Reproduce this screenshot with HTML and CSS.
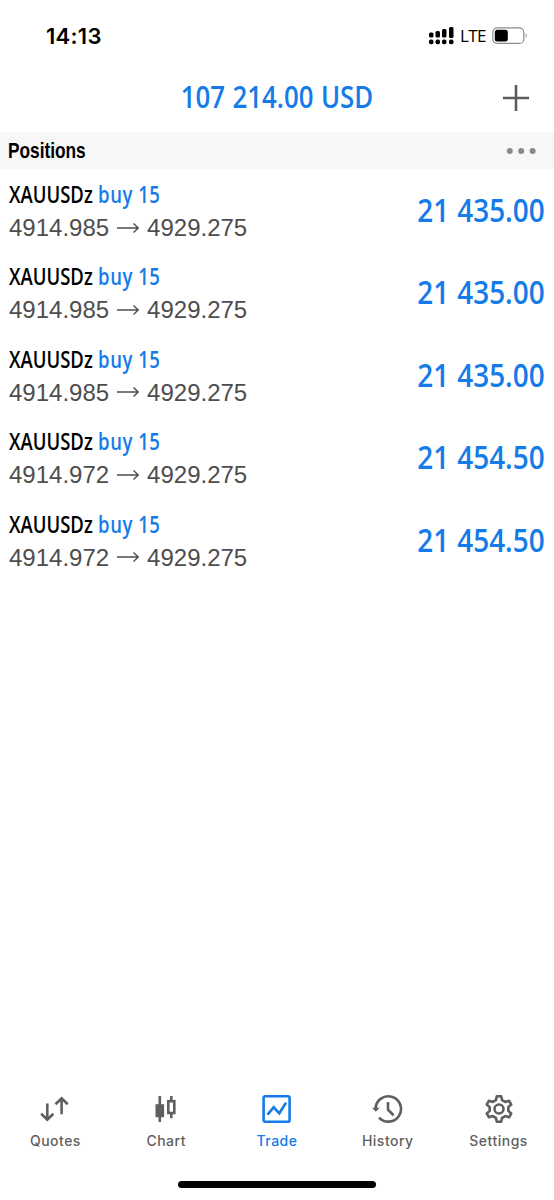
FILE: index.html
```html
<!DOCTYPE html>
<html lang="en">
<head>
    <meta charset="utf-8">
    <title>Trade</title>
    <link rel="stylesheet" href="styles.css">
</head>
<body>
    <div class="status-bar">
        <span class="time">14:13</span>
        <div class="status-icons">
            <svg width="26" height="18" viewBox="0 0 26 18">
                <rect x="0" y="5.5" width="4.5" height="5" rx="1.5"/>
                <rect x="6.5" y="4" width="4.5" height="6.5" rx="1.5"/>
                <rect x="13" y="2" width="4.5" height="8.5" rx="1.5"/>
                <rect x="20" y="0" width="4.5" height="11" rx="1.5"/>
                <rect x="0" y="12.6" width="4.5" height="4.7" rx="1.8"/>
                <rect x="6.5" y="12.6" width="4.5" height="4.7" rx="1.8"/>
                <rect x="13" y="12.6" width="4.5" height="4.7" rx="1.8"/>
                <rect x="20" y="12.6" width="4.5" height="4.7" rx="1.8"/>
            </svg>
            <span class="network">LTE</span>
            <svg width="36" height="18" viewBox="0 0 36 18">
                <rect x="0.8" y="0.8" width="31" height="15.6" rx="4.5" fill="none" stroke="#8c8c8c" stroke-width="1.2"/>
                <rect x="2.8" y="2.7" width="13" height="11.8" rx="2.5"/>
                <path d="M33.7 6.2 Q36 8.6 33.7 11z" fill="#8c8c8c"/>
            </svg>
        </div>
    </div>

    <div class="header">
        <h1 class="balance">107 214.00 USD</h1>
        <svg class="add" width="26" height="26" viewBox="0 0 26 26">
            <path d="M13 0v26M0 13h26" stroke="#5c5c5c" stroke-width="2.6"/>
        </svg>
    </div>

    <div class="section">
        <h2>Positions</h2>
        <svg width="30" height="8" viewBox="0 0 30 8" fill="#8a8a8a">
            <circle cx="3.8" cy="4" r="3"/>
            <circle cx="15.2" cy="4" r="3"/>
            <circle cx="26.6" cy="4" r="3"/>
        </svg>
    </div>

    <div class="positions">
        <div class="position">
            <div>
                <div class="symbol"><span class="name">XAUUSDz</span><span class="side">buy 15</span></div>
                <div class="prices">4914.985<svg class="arrow" viewBox="0 0 22 12"><path d="M0 6h21M16.5 1.5l4.7 4.5-4.7 4.5"/></svg>4929.275</div>
            </div>
            <div class="profit">21 435.00</div>
        </div>
        <div class="position">
            <div>
                <div class="symbol"><span class="name">XAUUSDz</span><span class="side">buy 15</span></div>
                <div class="prices">4914.985<svg class="arrow" viewBox="0 0 22 12"><path d="M0 6h21M16.5 1.5l4.7 4.5-4.7 4.5"/></svg>4929.275</div>
            </div>
            <div class="profit">21 435.00</div>
        </div>
        <div class="position">
            <div>
                <div class="symbol"><span class="name">XAUUSDz</span><span class="side">buy 15</span></div>
                <div class="prices">4914.985<svg class="arrow" viewBox="0 0 22 12"><path d="M0 6h21M16.5 1.5l4.7 4.5-4.7 4.5"/></svg>4929.275</div>
            </div>
            <div class="profit">21 435.00</div>
        </div>
        <div class="position">
            <div>
                <div class="symbol"><span class="name">XAUUSDz</span><span class="side">buy 15</span></div>
                <div class="prices">4914.972<svg class="arrow" viewBox="0 0 22 12"><path d="M0 6h21M16.5 1.5l4.7 4.5-4.7 4.5"/></svg>4929.275</div>
            </div>
            <div class="profit">21 454.50</div>
        </div>
        <div class="position">
            <div>
                <div class="symbol"><span class="name">XAUUSDz</span><span class="side">buy 15</span></div>
                <div class="prices">4914.972<svg class="arrow" viewBox="0 0 22 12"><path d="M0 6h21M16.5 1.5l4.7 4.5-4.7 4.5"/></svg>4929.275</div>
            </div>
            <div class="profit">21 454.50</div>
        </div>
    </div>

    <div class="tabs">
        <div class="tab">
            <svg width="32" height="32" viewBox="0 0 32 32">
                <path d="M8.3 9.6v16M2.2 19.8l6.100 6 6.100-6M22.6 20.3V4M16.5 10.2l6.100-6 6.100 6"/>
            </svg>
            <span>Quotes</span>
        </div>
        <div class="tab">
            <svg width="32" height="32" viewBox="0 0 32 32">
                <path d="M9.8 2v26M21.3 2v5M21.3 19v5.3"/>
                <rect x="5.5" y="10.2" width="8.6" height="13" fill="#5f5f5f" stroke="none"/>
                <rect x="18.3" y="7.2" width="6" height="11.8"/>
            </svg>
            <span>Chart</span>
        </div>
        <div class="tab active">
            <svg width="32" height="32" viewBox="0 0 32 32">
                <rect x="2.6" y="2.2" width="26" height="25.6" rx="1.8"/>
                <path d="M6.5 20.7l6.2-7.4 5.6 6L25 8.7"/>
            </svg>
            <span>Trade</span>
        </div>
        <div class="tab">
            <svg width="32" height="32" viewBox="0 0 32 32">
                <path d="M3.6 15A12.7 12.7 0 1 1 7 23.6"/>
                <path d="M0 13.7h7.6L3.8 17.8z" fill="#5f5f5f" stroke="none"/>
                <path d="M16 8v7.8l5.6 5.4"/>
            </svg>
            <span>History</span>
        </div>
        <div class="tab">
            <svg width="32" height="32" viewBox="0 0 32 32">
                <g transform="translate(16 15)">
                    <path d="M-2.2-12.8L2.2-12.8 3-9 6.3-7.1 10-8.3 12.2-4.5 9.3-1.9 9.3 1.9 12.2 4.5 10 8.3 6.3 7.1 3 9 2.2 12.8-2.2 12.8-3 9-6.3 7.1-10 8.3-12.2 4.5-9.3 1.9-9.3-1.9-12.2-4.5-10-8.3-6.3-7.1-3-9z" stroke-linejoin="round"/>
                    <circle r="4.5"/>
                </g>
            </svg>
            <span>Settings</span>
        </div>
    </div>
    <div class="home-bar"></div>
</body>
</html>
```
FILE: styles.css
```css
* {
    box-sizing: border-box;
}
body {
    margin: 0;
    height: 1200px;
    display: flex;
    flex-direction: column;
    background-color: #fff;
    color: #000;
    font-family: "Inter", sans-serif;
    overflow: hidden;
}
.status-bar {
    height: 63px;
    padding: 8px 26px 0 46px;
    display: flex;
    align-items: center;
    justify-content: space-between;
}
.time {
    font-size: 22px;
    font-weight: 600;
    letter-spacing: 0.3px;
}
.status-icons {
    display: flex;
    align-items: center;
}
.network {
    width: 26px;
    margin: 0 6px 0 5px;
    font-family: "Open Sans", sans-serif;
    font-size: 17px;
    font-weight: 500;
    letter-spacing: -0.6px;
    line-height: 20px;
}
.header {
    height: 69px;
    padding: 0 25px 0 51px;
    display: flex;
    align-items: center;
}
.balance {
    flex: 1;
    margin: 0 0 3px;
    color: #147be8;
    font-family: "Open Sans", sans-serif;
    font-size: 31px;
    font-weight: 650;
    line-height: 40px;
    text-align: center;
    white-space: nowrap;
    word-spacing: 1px;
    transform: scaleX(0.832);
}
.section {
    height: 37px;
    padding: 0 18px 0 8px;
    display: flex;
    align-items: center;
    justify-content: space-between;
    background-color: #f7f7f7;
}
.section h2 {
    margin: 0;
    font-family: "Liberation Sans", Arial, sans-serif;
    font-size: 22px;
    transform: scaleX(0.785);
    transform-origin: left;
}
.positions {
    flex: 1;
    padding-top: 8px;
}
.position {
    height: 82.4px;
    padding: 0 9px;
    display: flex;
    justify-content: space-between;
}
/* condensed look for the symbol and the amounts */
.symbol {
    width: 240px;
    font-family: "Open Sans", sans-serif;
    font-size: 24px;
    font-weight: 600;
    line-height: 34px;
    white-space: nowrap;
    transform: scaleX(0.77);
    transform-origin: left;
}
.side {
    margin-left: 7px;
    color: #147be8;
    letter-spacing: 0.7px;
}
.prices {
    display: flex;
    align-items: center;
    color: #4d4d4d;
    font-family: "Liberation Sans", Arial, sans-serif;
    font-size: 24px;
    line-height: 34px;
}
.arrow {
    width: 22px;
    height: 12px;
    margin: 0 8px 1px;
    fill: none;
    stroke: #4d4d4d;
    stroke-width: 1.4;
}
.profit {
    color: #147be8;
    font-family: "Open Sans", sans-serif;
    font-size: 33px;
    font-weight: 650;
    line-height: 65px;
    white-space: nowrap;
    word-spacing: 1px;
    transform: scaleX(0.846);
    transform-origin: right;
}
.tabs {
    height: 90px;
    display: flex;
}
.tab {
    flex: 1;
    padding-top: 3px;
    display: flex;
    flex-direction: column;
    align-items: center;
    color: #5f5f5f;
    font-size: 14px;
    font-weight: 450;
    letter-spacing: 0.5px;
}
.tab svg {
    margin-bottom: 6px;
    fill: none;
    stroke: #5f5f5f;
    stroke-width: 2.6;
}
.tab.active {
    color: #147be8;
}
.tab.active svg {
    stroke: #147be8;
}
.home-bar {
    width: 198px;
    height: 7px;
    margin: 0 auto 12px;
    border-radius: 4px;
    background-color: #000;
}
```
